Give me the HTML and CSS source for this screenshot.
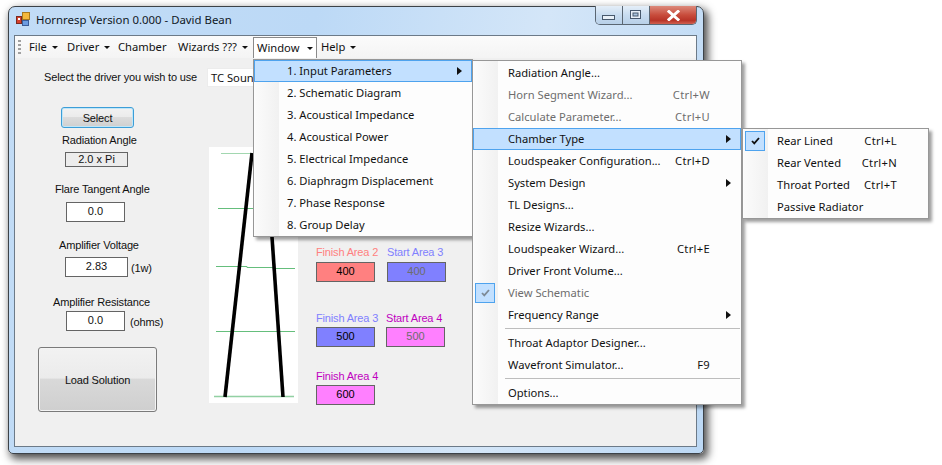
FILE: index.html
```html
<!DOCTYPE html>
<html lang="en">
<head>
<meta charset="utf-8">
<title>Hornresp Version 0.000 - David Bean</title>
<link rel="stylesheet" href="styles.css">
</head>
<body>
<div class="window">
  <div class="titlebar">
    <svg class="app-icon" width="14" height="14" viewBox="0 0 14 14"><rect x="0.5" y="4.5" width="5" height="7" fill="#d8402c" stroke="#7a2a20"/><rect x="6.5" y="0.5" width="7" height="7" fill="#f4b83c" stroke="#a87a20"/><rect x="6.5" y="8.5" width="6" height="5" fill="#6c9ce0" stroke="#3c5c98"/><rect x="2" y="6" width="2" height="2" fill="#fff"/></svg>
    <span class="title">Hornresp Version 0.000 - David Bean</span>
    <div class="controls">
      <div class="ctl ctl-min"><svg width="14" height="6" viewBox="0 0 14 6"><rect x="0.5" y="0.5" width="12" height="4" fill="#e8f0f8" stroke="#47586c"/></svg></div>
      <div class="ctl ctl-max"><svg width="12" height="10" viewBox="0 0 12 10"><rect x="0.5" y="0.5" width="10" height="8" fill="#e8f0f8" stroke="#47586c"/><rect x="3" y="3" width="5" height="3" fill="#aac4de" stroke="#47586c" stroke-width="1"/></svg></div>
      <div class="ctl ctl-close"><svg width="13" height="11" viewBox="0 0 13 11"><path d="M2 1.5 L11 9.5 M11 1.5 L2 9.5" stroke="#fff" stroke-width="3" stroke-linecap="square" fill="none"/></svg></div>
    </div>
  </div>
  <div class="client">
    <div class="menubar">
      <div class="grip"></div>
      <div class="mb-item mb-file">File<i class="caret"></i></div>
      <div class="mb-item mb-driver">Driver<i class="caret"></i></div>
      <div class="mb-item mb-chamber">Chamber</div>
      <div class="mb-item mb-wizards">Wizards ???<i class="caret"></i></div>
      <div class="mb-item mb-window">Window<i class="caret"></i></div>
      <div class="mb-item mb-help">Help<i class="caret"></i></div>
    </div>
    <div class="driver-row">
      <span class="driver-label">Select the driver you wish to use</span>
      <div class="combo">TC Sounds</div>
    </div>
    <div class="main">
      <div class="left">
        <button class="btn-select">Select</button>
        <div class="lbl lbl-rad">Radiation Angle</div>
        <div class="box box-ro">2.0 x Pi</div>
        <div class="lbl lbl-flare">Flare Tangent Angle</div>
        <div class="box box-flare">0.0</div>
        <div class="lbl lbl-volt">Amplifier Voltage</div>
        <div class="box-row box-row-volt"><div class="box box-volt">2.83</div><span class="unit">(1w)</span></div>
        <div class="lbl lbl-res">Amplifier Resistance</div>
        <div class="box-row box-row-res"><div class="box box-res">0.0</div><span class="unit">(ohms)</span></div>
        <button class="btn-load">Load Solution</button>
      </div>
      <svg class="chart" width="89" height="256" viewBox="0 0 89 256">
        <g stroke="#3fae5c" stroke-width="1" fill="none" opacity=".8">
          <path d="M12 6.5 H44" opacity=".6"/>
          <path d="M9 61.5 H44"/>
          <path d="M7 119.5 H38 L38 120.5 H64 L64 121.5 H86"/>
          <path d="M7 184.5 H86"/>
          <path d="M5 249.5 H85" stroke-width="1.5" opacity=".7"/>
        </g>
        <g stroke="#000" stroke-width="3.6" fill="none">
          <path d="M16 250 L43 6"/>
          <path d="M74 250 L63 90"/>
        </g>
      </svg>
      <div class="areas">
        <div class="area"><div class="area-lbl c-red">Finish Area 2</div><div class="box area-box bg-red">400</div></div>
        <div class="area"><div class="area-lbl c-blue">Start Area 3</div><div class="box area-box bg-blue dim">400</div></div>
        <div class="area area-r2"><div class="area-lbl c-blue">Finish Area 3</div><div class="box area-box bg-blue">500</div></div>
        <div class="area area-r2 area-shift"><div class="area-lbl c-pink">Start Area 4</div><div class="box area-box bg-pink dim">500</div></div>
        <div class="area area-r3"><div class="area-lbl c-pink">Finish Area 4</div><div class="box area-box bg-pink">600</div></div>
      </div>
    </div>
  </div>
</div>

<div class="menu menu-window">
  <div class="row hot"><span class="t">1. Input Parameters</span><i class="arrow"></i></div>
  <div class="row"><span class="t">2. Schematic Diagram</span></div>
  <div class="row"><span class="t">3. Acoustical Impedance</span></div>
  <div class="row"><span class="t">4. Acoustical Power</span></div>
  <div class="row"><span class="t">5. Electrical Impedance</span></div>
  <div class="row"><span class="t">6. Diaphragm Displacement</span></div>
  <div class="row"><span class="t">7. Phase Response</span></div>
  <div class="row"><span class="t">8. Group Delay</span></div>
</div>

<div class="menu menu-chamber">
  <div class="row"><span class="t">Radiation Angle...</span></div>
  <div class="row off"><span class="t">Horn Segment Wizard...</span><span class="k">Ctrl+W</span></div>
  <div class="row off"><span class="t">Calculate Parameter...</span><span class="k">Ctrl+U</span></div>
  <div class="row hot"><span class="t">Chamber Type</span><i class="arrow"></i></div>
  <div class="row"><span class="t">Loudspeaker Configuration...</span><span class="k">Ctrl+D</span></div>
  <div class="row"><span class="t">System Design</span><i class="arrow"></i></div>
  <div class="row"><span class="t">TL Designs...</span></div>
  <div class="row"><span class="t">Resize Wizards...</span></div>
  <div class="row"><span class="t">Loudspeaker Wizard...</span><span class="k">Ctrl+E</span></div>
  <div class="row"><span class="t">Driver Front Volume...</span></div>
  <div class="row off"><div class="check"><svg width="9" height="8" viewBox="0 0 9 8"><path d="M1 4 L3.3 6.4 L8 1" stroke="#7d8a96" stroke-width="1.8" fill="none"/></svg></div><span class="t">View Schematic</span></div>
  <div class="row"><span class="t">Frequency Range</span><i class="arrow"></i></div>
  <div class="sep"></div>
  <div class="row"><span class="t">Throat Adaptor Designer...</span></div>
  <div class="row"><span class="t">Wavefront Simulator...</span><span class="k">F9</span></div>
  <div class="sep"></div>
  <div class="row"><span class="t">Options...</span></div>
</div>

<div class="menu menu-sub">
  <div class="row"><div class="check"><svg width="9" height="8" viewBox="0 0 9 8"><path d="M1 4 L3.3 6.4 L8 1" stroke="#101010" stroke-width="1.8" fill="none"/></svg></div><span class="t">Rear Lined</span><span class="k">Ctrl+L</span></div>
  <div class="row"><span class="t">Rear Vented</span><span class="k">Ctrl+N</span></div>
  <div class="row"><span class="t">Throat Ported</span><span class="k">Ctrl+T</span></div>
  <div class="row"><span class="t">Passive Radiator</span></div>
</div>
</body>
</html>
```

FILE: styles.css
```css
* { box-sizing: border-box; }
html, body { margin: 0; height: 100%; }
body {
  position: relative;
  width: 942px;
  height: 465px;
  overflow: hidden;
  background: #fff;
  font-family: "Noto Sans", sans-serif;
  font-size: 11.2px;
  line-height: 15px;
  color: #111;
}
.window {
  position: absolute;
  left: 8px;
  top: 6px;
  width: 696px;
  height: 448px;
  padding: 0 6px 6px 5px;
  display: flex;
  flex-direction: column;
  border: 1px solid #3c4248;
  border-radius: 7px 7px 5px 5px;
  background: linear-gradient(100deg, #c2dcf6 0%, #bcd9f6 40%, #d4e6f8 70%, #bcd8f4 100%);
  box-shadow: 3px 4px 8px 1px rgba(0, 0, 0, .7);
}
.titlebar {
  flex: none;
  height: 28px;
  display: flex;
  align-items: center;
  padding: 0 0 4px 2px;
  position: relative;
}
.app-icon { flex: none; }
.title { margin-left: 6px; font-size: 11.4px; color: #10181f; white-space: nowrap; }
.controls {
  position: absolute;
  top: -1px;
  right: 0;
  display: flex;
  height: 19px;
  border: 1px solid #5a6672;
  border-top: 0;
  border-radius: 0 0 5px 5px;
  overflow: hidden;
}
.ctl { display: flex; align-items: center; justify-content: center; }
.ctl-min { width: 27px; padding-top: 6px; background: linear-gradient(#e4eef8, #c8dcf0 50%, #b8d0e8); border-right: 1px solid #5a6672; }
.ctl-max { width: 27px; background: linear-gradient(#e4eef8, #c8dcf0 50%, #b8d0e8); border-right: 1px solid #5a6672; }
.ctl-close { width: 46px; background: linear-gradient(#dc8a7c, #c84c3c 50%, #b83428 80%, #d06050); }
.client {
  flex: 1;
  min-height: 0;
  background: #f0f0f0;
  border: 1px solid #6c7a88;
  position: relative;
}
.menubar {
  height: 22px;
  display: flex;
  align-items: center;
  background: linear-gradient(#fbfbfb, #f4f4f4);
  padding-left: 3px;
}
.grip {
  width: 3px;
  height: 15px;
  margin-right: 8px;
  background: repeating-linear-gradient(#a0a0a0 0 2px, transparent 2px 4px);
}
.mb-item { display: flex; align-items: center; white-space: nowrap; height: 21px; padding-bottom: 1px; }
.caret {
  width: 0;
  height: 0;
  margin-left: 5px;
  margin-top: 2px;
  border: 3px solid transparent;
  border-top: 3px solid #111;
  border-bottom: 0;
}
.mb-file { width: 38px; }
.mb-driver { width: 51px; }
.mb-chamber { width: 60px; }
.mb-wizards { width: 75px; }
.mb-window { width: 64px; padding-left: 3px; margin-top: 1px; background: #fff; border: 1px solid #8a8a8a; border-bottom: 0; }
.mb-window .caret { margin-left: 8px; }
.mb-help { margin-left: 4px; }
.driver-row { display: flex; align-items: center; height: 29px; padding: 10px 0 0 29px; }
.driver-label, .left, .areas { font-family: "Liberation Sans", sans-serif; font-size: 11px; letter-spacing: -.16px; }
.driver-label { width: 163px; white-space: nowrap; }
.combo { width: 130px; height: 19px; padding: 1px 3px; background: #fff; border: 1px solid #ececec; overflow: hidden; white-space: nowrap; }
.main { display: flex; align-items: flex-start; }
.left { flex: none; width: 194px; padding-left: 23px; display: flex; flex-direction: column; align-items: flex-start; }
button { font: inherit; letter-spacing: inherit; color: inherit; }
.btn-select {
  width: 73px;
  height: 21px;
  margin: 20px 0 0 23px;
  padding: 1px 0 0;
  background: linear-gradient(#f2f2f2 0%, #ebebeb 48%, #dcdcdc 50%, #cfcfcf 100%);
  border: 1px solid #3c9ed8;
  border-radius: 3px;
  box-shadow: inset 0 0 0 1px #bfe6f8;
}
.lbl { white-space: nowrap; padding-top: 1px; }
.lbl-rad { margin: 4px 0 0 24px; }
.box {
  display: flex;
  align-items: center;
  justify-content: center;
  background: #fff;
  border: 1px solid #646464;
  height: 20px;
  padding-bottom: 1px;
  letter-spacing: 0;
}
.box-ro { width: 63px; height: 15px; margin: 4px 0 0 27px; background: #ececec; padding-bottom: 0; }
.lbl-flare { margin: 14px 0 0 17px; }
.box-flare { width: 59px; margin: 5px 0 0 28px; }
.lbl-volt { margin: 15px 0 0 21px; }
.box-row { display: flex; align-items: center; }
.box-row-volt { margin: 4px 0 0 27px; }
.box-row-res { margin: 1px 0 0 28px; }
.box-volt { width: 63px; }
.box-res { width: 59px; }
.unit { margin-left: 3px; padding-top: 2px; }
.box-row-res .unit { margin-left: 5px; }
.lbl-res { margin: 17px 0 0 15px; }
.btn-load {
  width: 119px;
  height: 65px;
  margin-top: 16px;
  padding: 1px 0 0;
  background: linear-gradient(#f2f2f2 0%, #ebebeb 48%, #d9d9d9 49%, #cfcfcf 100%);
  border: 1px solid #7a7a7a;
  border-radius: 3px;
  box-shadow: inset 0 0 0 1px #f4f4f4;
}
.chart { flex: none; display: block; margin-top: 60px; background: #fff; }
.areas {
  margin: 157px 0 0 18px;
  display: grid;
  grid-template-columns: 71px 71px;
  align-content: start;
}
.area-lbl { white-space: nowrap; margin-bottom: 3px; height: 15px; padding-top: 1px; box-sizing: border-box; line-height: 15px; }
.area-box { width: 59px; color: #000; }
.area-r2 { margin-top: 28px; }
.area-r2 .area-lbl { margin-bottom: 2px; }
.area-r3 { margin-top: 21px; }
.area-r3 .area-lbl { margin-bottom: 2px; }
.area-shift { margin-left: -1px; }
.c-red { color: #ff8080; }
.c-blue { color: #8080ff; }
.c-pink { color: #c000c0; }
.bg-red { background: #ff8080; }
.bg-blue { background: #8080ff; }
.bg-pink { background: #ff80ff; }
.dim { color: #6d6d6d; }
.menu {
  position: absolute;
  background: linear-gradient(to right, #fbfbfb, #f1f1f1) no-repeat 1px 0 / 24px 100%, #fdfdfd;
  border: 1px solid #979797;
  box-shadow: 3px 3px 3px rgba(0, 0, 0, .38);
}
.menu-window { left: 253px; top: 59px; width: 220px; height: 178px; }
.menu-chamber { left: 472px; top: 60px; width: 270px; height: 345px; padding-top: 1px; }
.menu-sub { left: 742px; top: 128px; width: 187px; height: 91px; padding-top: 1px; }
.row {
  position: relative;
  height: 22px;
  display: flex;
  align-items: center;
  padding-bottom: 2px;
  white-space: nowrap;
}
.menu-window .row { padding-left: 33px; }
.menu-chamber .row { padding-left: 35px; padding-right: 31px; }
.menu-sub .row { padding-left: 34px; padding-right: 31px; }
.row .t { flex: 1; }
.row .k { flex: none; letter-spacing: .3px; }
.row.off { color: #6d6d6d; }
.row.hot { background: #c2e0ff; outline: 1px solid #4ea3ee; outline-offset: -1px; }
.arrow {
  position: absolute;
  top: 7px;
  right: 10px;
  width: 0;
  height: 0;
  border: 4px solid transparent;
  border-left: 5px solid #111;
  border-right: 0;
}
.sep { height: 6px; margin-left: 32px; margin-right: 1px; padding-top: 2px; }
.sep::before { content: ""; display: block; height: 1px; background: #bdbdbd; }
.check {
  position: absolute;
  left: 2px;
  top: 1px;
  width: 20px;
  height: 20px;
  display: flex;
  align-items: center;
  justify-content: center;
  background: #c2e0ff;
  border: 1px solid #4ea3ee;
}
```
